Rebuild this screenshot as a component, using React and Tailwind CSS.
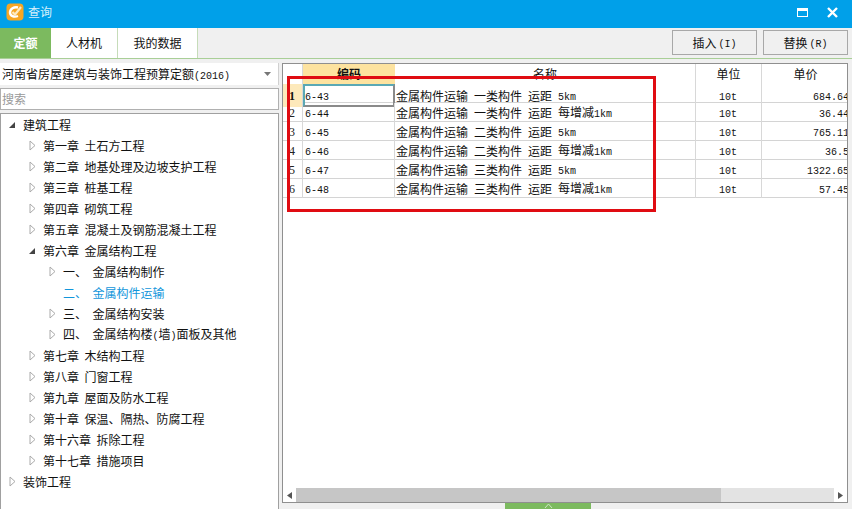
const CJK = `font-['Noto_Sans_CJK_SC','Liberation_Sans',sans-serif]`;

function Lat({ children, className = "" }) {
  return <span className={`font-['Liberation_Mono',monospace] text-[10px] ${className}`}>{children}</span>;
}

function Logo() {
  return (
    <svg width="18" height="18" viewBox="0 0 18 18">
      <rect x="0.5" y="0.5" width="17" height="17" rx="4" fill="#f6a623" />
      <path d="M12 4.500C8 3.500 4 6 4 9.500c0 3.500 4 5 8 3.500" fill="none" stroke="#fff" strokeWidth="2.400" />
      <path d="M6.500 9l2.500 2.500L15 4" fill="none" stroke="#fde9c0" strokeWidth="2.200" />
    </svg>
  );
}

function Open() {
  return (
    <svg className="-ml-[1px]" width="8" height="8" viewBox="0 0 8 8">
      <path d="M7 1v6H1z" fill="#444" />
    </svg>
  );
}

function Closed() {
  return (
    <svg width="7" height="11" viewBox="0 0 7 11">
      <path d="M1 1l5 4.500L1 10z" fill="#fff" stroke="#aaa" />
    </svg>
  );
}

const tree = [
  [0, "open", "建筑工程"],
  [1, "closed", "第一章  土石方工程"],
  [1, "closed", "第二章  地基处理及边坡支护工程"],
  [1, "closed", "第三章  桩基工程"],
  [1, "closed", "第四章  砌筑工程"],
  [1, "closed", "第五章  混凝土及钢筋混凝土工程"],
  [1, "open", "第六章  金属结构工程"],
  [2, "closed", "一、  金属结构制作"],
  [2, "none", "二、  金属构件运输", true],
  [2, "closed", "三、  金属结构安装"],
  [2, "closed", "四、  金属结构楼", false, "墙", "面板及其他"],
  [1, "closed", "第七章  木结构工程"],
  [1, "closed", "第八章  门窗工程"],
  [1, "closed", "第九章  屋面及防水工程"],
  [1, "closed", "第十章  保温、隔热、防腐工程"],
  [1, "closed", "第十六章  拆除工程"],
  [1, "closed", "第十七章  措施项目"],
  [0, "closed", "装饰工程"],
];

const indent = ["pl-[8px]", "pl-[28px]", "pl-[48px]"];

const rows = [
  ["6-43", "一类构件", false, "684.64"],
  ["6-44", "一类构件", true, "36.44"],
  ["6-45", "二类构件", false, "765.11"],
  ["6-46", "二类构件", true, "36.5"],
  ["6-47", "三类构件", false, "1322.65"],
  ["6-48", "三类构件", true, "57.45"],
];

const cols = "grid grid-cols-[20px_92px_301px_66px_87px]";
const down = "inline-block pt-[4px]";

export default function App() {
  return (
    <div className={`relative w-[852px] h-[509px] overflow-hidden flex flex-col bg-[#f0f0f0] text-[12px] text-[#111] ${CJK}`}>
      {/* title bar */}
      <div className="h-[28px] shrink-0 bg-[#00a0e9] flex items-center pl-[6px] pr-[14px] pb-[4px] text-white">
        <Logo />
        <span className="ml-[4px] text-[#d8f0fb]">查询</span>
        <div className="ml-auto flex items-center gap-[19px]">
          <div className="w-[11px] h-[9px] border border-white border-t-[3px]" />
          <svg width="11" height="11" viewBox="0 0 11 11">
            <path d="M1 1l9 9M10 1l-9 9" stroke="#fff" strokeWidth="2.400" />
          </svg>
        </div>
      </div>

      {/* tabs */}
      <div className="h-[31px] shrink-0 flex border-b border-[#a9cf97] bg-[#f0f0f0]">
        <div className="w-[51px] bg-[#7cba5f] text-white font-bold flex items-center justify-center">定额</div>
        <div className="w-[67px] bg-white border-r border-[#c6dcb9] flex items-center justify-center">人材机</div>
        <div className="w-[80px] bg-white border-r border-[#c6dcb9] flex items-center justify-center">我的数据</div>
        <div className="ml-auto flex items-center gap-[6px] pr-[4px] pb-[3px] pt-[2px]">
          <div className="w-[85px] h-[25px] border border-[#a8a8a8] flex items-center justify-center gap-[2px]">
            插入<Lat className={down}>(I)</Lat>
          </div>
          <div className="w-[85px] h-[25px] border border-[#a8a8a8] flex items-center justify-center gap-[2px]">
            替换<Lat className={down}>(R)</Lat>
          </div>
        </div>
      </div>

      {/* body */}
      <div className="flex-1 flex min-h-0 pt-[4px]">
        {/* left */}
        <div className="w-[279px] shrink-0 flex flex-col gap-[3px]">
          <div className="h-[22px] bg-white flex items-center pl-[2px] pr-[7px] border-r border-[#d0d0d0]">
            <span>河南省房屋建筑与装饰工程预算定额</span>
            <Lat className={down}>(2016)</Lat>
            <svg className="ml-auto" width="7" height="4" viewBox="0 0 7 4">
              <path d="M0 0h7L3.500 4z" fill="#777" />
            </svg>
          </div>
          <div className="h-[22px] bg-white border border-[#b0b0b0] flex items-center pl-[1px] text-[#999]">搜索</div>
          <div className="flex-1 bg-white border border-[#a0a0a0] border-b-0 overflow-hidden">
            {tree.map(([lvl, icon, label, active, wall, rest], i) => (
              <div key={i} className={`h-[21px] flex items-center whitespace-pre ${indent[lvl]} ${active ? "text-[#1296db]" : ""}`}>
                <span className="w-[14px] flex items-center shrink-0">
                  {icon === "open" && <Open />}
                  {icon === "closed" && <Closed />}
                </span>
                <span>
                  {label}
                  {wall && <Lat>(</Lat>}
                  {wall}
                  {wall && <Lat>)</Lat>}
                  {rest}
                </span>
              </div>
            ))}
          </div>
        </div>

        {/* right */}
        <div className="flex-1 min-w-0 pl-[3px] pr-[4px] pb-[6px] relative">
          <div className="h-full bg-white border border-[#8f8f8f] flex flex-col overflow-hidden">
            <div className={`${cols} h-[20px] shrink-0`}>
              <div className="border-r border-[#d8d8d8]" />
              <div className="bg-[#fde3a0] font-bold flex items-center justify-center">编码</div>
              <div className="border-r border-[#d8d8d8] flex items-center justify-center">名称</div>
              <div className="border-r border-[#d8d8d8] flex items-center justify-center">单位</div>
              <div className="flex items-center justify-center">单价</div>
            </div>
            {rows.map(([code, cls, inc, price], i) => (
              <div key={code} className={`${cols} h-[19px] shrink-0 border-b border-[#d4d4d4]`}>
                <div className={`border-r border-[#d8d8d8] pl-[6px] flex items-center text-[12px] font-['Liberation_Serif',serif] ${i === 0 ? "bg-[#fde9bb] font-bold" : "text-[#222]"}`}>
                  {i + 1}
                </div>
                <div className={`flex items-center ${i === 0 ? "border-2 border-[#8a8a8a] border-t-[#5aa9b5] border-l-[#5aa9b5] pl-0" : "pl-[2px] border-r border-[#d8d8d8]"}`}>
                  <Lat className={down}>{code}</Lat>
                </div>
                <div className="flex items-center gap-[6px] pl-[1px] border-r border-[#d8d8d8]">
                  <span>金属构件运输</span>
                  <span>{cls}</span>
                  <span>运距</span>
                  {inc ? (
                    <span>每增减<Lat>1km</Lat></span>
                  ) : (
                    <Lat className={down}>5km</Lat>
                  )}
                </div>
                <div className="flex items-center pl-[23px] border-r border-[#d8d8d8]">
                  <Lat className={down}>10t</Lat>
                </div>
                <div className="flex items-center justify-end">
                  <Lat className={down}>{price}</Lat>
                </div>
              </div>
            ))}
            {/* scrollbar */}
            <div className="mt-auto h-[14px] shrink-0 bg-[#e3e3e3] flex items-stretch">
              <div className="w-[13px] bg-white flex items-center justify-center">
                <svg width="5" height="7" viewBox="0 0 5 7"><path d="M5 0v7L0 3.500z" fill="#555" /></svg>
              </div>
              <div className="w-[425px] bg-[#c6c6c6]" />
              <div className="ml-auto w-[13px] bg-white flex items-center justify-center">
                <svg width="5" height="7" viewBox="0 0 5 7"><path d="M0 0v7l5-3.500z" fill="#555" /></svg>
              </div>
            </div>
          </div>
        </div>
      </div>

      {/* highlight rectangle drawn over the table */}
      <div className="absolute left-[287px] top-[76px] w-[369px] h-[136px] border-[3px] border-[#e00c12] pointer-events-none" />

      {/* collapse handle */}
      <div className="absolute left-[505px] top-[503px] w-[86px] h-[6px] bg-[#7cba5f] flex justify-center">
        <svg width="9" height="6" viewBox="0 0 9 6"><path d="M1 5l3.500-4L8 5" fill="none" stroke="#cfe6c2" /></svg>
      </div>
    </div>
  );
}
